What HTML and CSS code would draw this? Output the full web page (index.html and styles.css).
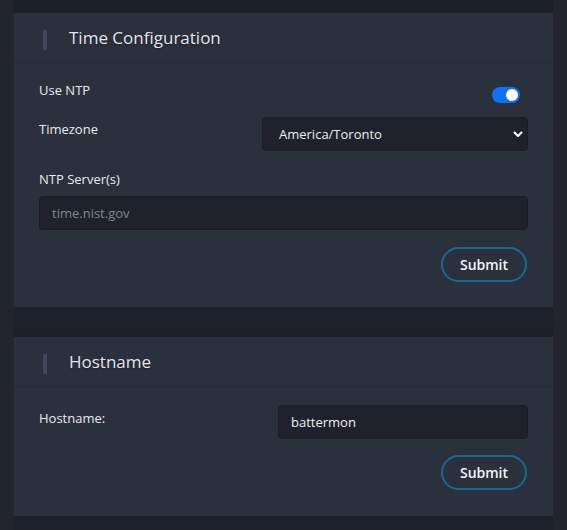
FILE: index.html
```html
<!DOCTYPE html>
<html>
<head>
<meta charset="utf-8">
<link rel="stylesheet" href="styles.css">
</head>
<body>
<main class="page">
  <section class="card">
    <header class="card-header">
      <span class="accent"></span>
      <h2 class="title">Time Configuration</h2>
    </header>
    <div class="card-body">
      <div class="row row-ntp">
        <span class="label">Use NTP</span>
        <span class="toggle"><span class="knob"></span></span>
      </div>
      <div class="row row-tz">
        <span class="label label-tz">Timezone</span>
        <div class="select">
          <span class="select-text">America/Toronto</span>
          <svg class="chevron" width="10" height="7" viewBox="0 0 10 7"><path d="M1.5 1.5 L5 5 L8.5 1.5" fill="none" stroke="#ffffff" stroke-width="2" stroke-linecap="round" stroke-linejoin="round"/></svg>
        </div>
      </div>
      <div class="field">
        <span class="label">NTP Server(s)</span>
        <div class="input input-full"><span class="placeholder">time.nist.gov</span></div>
      </div>
      <div class="actions">
        <button class="btn">Submit</button>
      </div>
    </div>
  </section>
  <section class="card">
    <header class="card-header">
      <span class="accent"></span>
      <h2 class="title">Hostname</h2>
    </header>
    <div class="card-body card-body-host">
      <div class="row row-host">
        <span class="label label-host">Hostname:</span>
        <div class="input input-host"><span class="value">battermon</span></div>
      </div>
      <div class="actions actions-host">
        <button class="btn">Submit</button>
      </div>
    </div>
  </section>
</main>
</body>
</html>
```
FILE: styles.css
```css
* { box-sizing: border-box; }
html, body { margin: 0; padding: 0; }
body {
  background: #1f222b;
  font-family: "Open Sans", "Noto Sans", sans-serif;
  color: #e4e7ec;
  width: 567px;
  height: 530px;
  overflow: hidden;
}
.page {
  padding: 13px 14px 0 14px;
  display: flex;
  flex-direction: column;
  gap: 30px;
  background: linear-gradient(to right, #222530 0, #222530 14px, #1e212a 14px, #1e212a 553px, #222530 553px);
  min-height: 530px;
}
.card {
  background: #2b303d;
  box-shadow: 0 -13px 0 #1e2029;
}
.card-header {
  height: 50px;
  border-bottom: 1px solid #262a35;
  display: flex;
  align-items: center;
  padding-left: 29px;
}
.accent {
  width: 4px;
  height: 20px;
  background: #3f4759;
  margin-top: 4px;
  margin-right: 22px;
}
.title {
  margin: 0;
  font-size: 17px;
  font-weight: 400;
  color: #e2e5ea;
  text-shadow: 0 1px 2px rgba(0,0,0,0.35);
}
.card-body {
  padding: 17px 25px 25px 25px;
  display: flex;
  flex-direction: column;
}
.row {
  display: flex;
  justify-content: space-between;
}
.label {
  font-size: 13px;
  line-height: 20px;
  color: #e8eaee;
}
.row-ntp { height: 37px; }
.toggle {
  margin-top: 7px;
  margin-right: 8px;
  width: 28px;
  height: 16px;
  border-radius: 8px;
  background: #1170f0;
  position: relative;
}
.knob {
  position: absolute;
  right: 2px;
  top: 2px;
  width: 12px;
  height: 12px;
  border-radius: 50%;
  background: #ffffff;
}
.row-tz { height: 34px; }
.label-tz { margin-top: 2px; }
.select {
  width: 266px;
  height: 34px;
  background: #1f222c;
  border: 1px solid #1a1d25;
  border-radius: 4px;
  display: flex;
  align-items: center;
  justify-content: space-between;
  padding: 0 4px 0 16px;
}
.select-text {
  font-size: 13px;
  color: #eceef2;
}
.chevron { display: block; margin-top: 1px; }
.field {
  margin-top: 18px;
  display: flex;
  flex-direction: column;
  gap: 7px;
}
.input {
  height: 34px;
  background: #1f222c;
  border: 1px solid #1a1d25;
  border-radius: 4px;
  display: flex;
  align-items: center;
}
.input-full { padding-left: 12px; }
.placeholder {
  font-size: 13px;
  color: #80858f;
}
.actions {
  margin-top: 17px;
  display: flex;
  justify-content: flex-end;
  padding-right: 1px;
}
.btn {
  width: 86px;
  height: 35px;
  border: 2px solid #1b6797;
  border-radius: 18px;
  background: transparent;
  color: #f2f4f7;
  font-family: "Open Sans", "Noto Sans", sans-serif;
  font-size: 14px;
  font-weight: 600;
  padding: 0;
}
.card-body-host { padding-top: 18px; padding-bottom: 26px; }
.row-host { height: 34px; }
.label-host { margin-top: 3px; }
.input-host {
  width: 250px;
  padding-left: 12px;
}
.value {
  font-size: 13px;
  color: #eceef2;
}
.actions-host { margin-top: 16px; }
```
